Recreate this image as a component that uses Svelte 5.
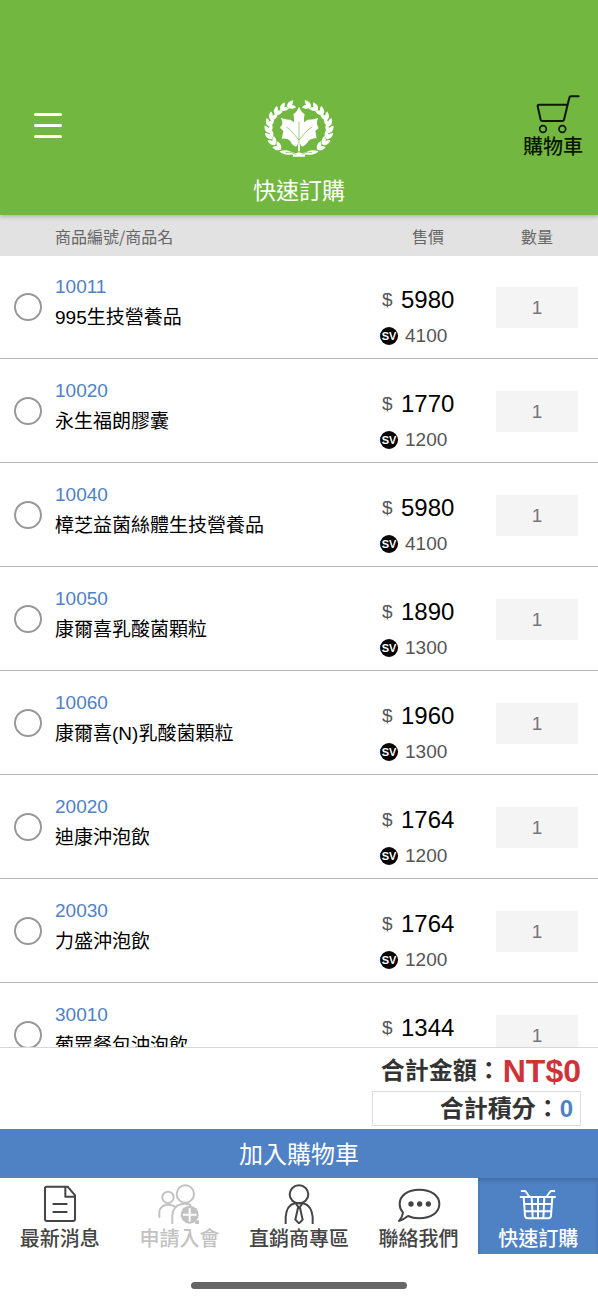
<script>
  let products = $state([
    { code: '10011', name: '995生技營養品', price: 5980, sv: 4100, qty: 1, picked: false },
    { code: '10020', name: '永生福朗膠囊', price: 1770, sv: 1200, qty: 1, picked: false },
    { code: '10040', name: '樟芝益菌絲體生技營養品', price: 5980, sv: 4100, qty: 1, picked: false },
    { code: '10050', name: '康爾喜乳酸菌顆粒', price: 1890, sv: 1300, qty: 1, picked: false },
    { code: '10060', name: '康爾喜(N)乳酸菌顆粒', price: 1960, sv: 1300, qty: 1, picked: false },
    { code: '20020', name: '迪康沖泡飲', price: 1764, sv: 1200, qty: 1, picked: false },
    { code: '20030', name: '力盛沖泡飲', price: 1764, sv: 1200, qty: 1, picked: false },
    { code: '30010', name: '葡眾餐包沖泡飲', price: 1344, sv: 900, qty: 1, picked: false }
  ]);

  let total = $derived(products.reduce((sum, p) => sum + (p.picked ? p.price * p.qty : 0), 0));
  let points = $derived(products.reduce((sum, p) => sum + (p.picked ? p.sv * p.qty : 0), 0));

  // Leaf pairs along the left half of the wreath; the right half is mirrored.
  const leaves = [];
  for (let i = 0; i < 9; i++) {
    const deg = 128 + i * 15;
    const a = (deg * Math.PI) / 180;
    const x = 132 + 90 * Math.cos(a);
    const y = 112 + 74 * Math.sin(a);
    leaves.push({ x, y, r: deg + 90 - 27 });
    leaves.push({ x, y, r: deg + 90 + 27 });
  }
</script>

<div class="app">
  <header>
    <button class="menu" aria-label="選單"><span></span><span></span><span></span></button>
    <div class="brand">
      <svg class="logo" viewBox="24 24 216 174" aria-hidden="true">
        <g fill="#fff">
          {#each [1, -1] as side}
            <g transform={side === 1 ? '' : 'translate(264 0) scale(-1 1)'}>
              {#each leaves as l}
                <path transform="translate({l.x} {l.y}) rotate({l.r})" d="M-2 0C4 -9 16 -8 25 0C16 8 4 7 -2 0Z" />
              {/each}
            </g>
          {/each}
          <path d="M132 44Q138 60 149 67Q146 76 147 91L158 83Q174 84 190 77Q184 88 186 97L191 108L181 117L185 139Q170 137 160 147Q154 160 141 164L135 156V178H129V156L123 164Q110 160 106 147Q98 137 80 140L85 117L75 107L82 97Q84 88 77 77Q92 84 106 83L117 91Q118 76 115 67Q126 60 132 44Z" />
          <path d="M73 178Q91 172 105 178Q121 187 132 181Q143 187 159 178Q173 172 191 178Q180 190 160 188Q146 185 151 194H113Q118 185 104 188Q84 190 73 178Z" />
        </g>
        <path d="M132 88V160M132 144L106 114L94 105M132 144L158 114L172 105" fill="none" stroke="#72b840" stroke-width="2" />
        <path d="M92 182Q108 176 124 188M172 182Q156 176 140 188" fill="none" stroke="#72b840" stroke-width="2" />
      </svg>
      <h1>快速訂購</h1>
    </div>
    <button class="cart">
      <svg viewBox="681 40 174 120" aria-hidden="true">
        <path d="M845 47H822Q818 47 817 51L801 117Q800 121 796 121H736Q732 121 731 117L722 77Q721 72 726 72H811" fill="none" stroke="#0b1605" stroke-width="6" stroke-linecap="round" stroke-linejoin="round" />
        <circle cx="738" cy="145" r="10" fill="none" stroke="#0b1605" stroke-width="5" />
        <circle cx="796" cy="145" r="10" fill="none" stroke="#0b1605" stroke-width="5" />
      </svg>
      <span>購物車</span>
    </button>
  </header>

  <div class="columns grid">
    <span class="c-name">商品編號/商品名</span>
    <span class="c-price">售價</span>
    <span class="c-qty">數量</span>
  </div>

  <ul class="list">
    {#each products as p}
      <li class="grid">
        <input class="pick" type="checkbox" aria-label={p.name} bind:checked={p.picked} />
        <div class="info">
          <a href="#{p.code}">{p.code}</a>
          <p>{p.name}</p>
        </div>
        <div class="price">
          <p class="amount"><span>$</span>{p.price}</p>
          <p class="sv"><span>SV</span>{p.sv}</p>
        </div>
        <input class="qty" type="text" inputmode="numeric" aria-label="數量 {p.name}" bind:value={p.qty} />
      </li>
    {/each}
  </ul>

  <section class="totals">
    <p class="money">合計金額：<strong>NT${total}</strong></p>
    <p class="points">合計積分：<strong>{points}</strong></p>
  </section>

  <button class="add">加入購物車</button>

  <nav>
    <a href="#news">
      <svg viewBox="114 177 132 120" aria-hidden="true">
        <path d="M140 185H203L225 211V282Q225 288 219 288H141Q135 288 135 282V190Q135 185 140 185ZM196 185V215H225M160 237H200M160 261H200" />
      </svg>
      <span>最新消息</span>
    </a>
    <a class="off" href="#join">
      <svg viewBox="473 177 132 120" aria-hidden="true">
        <circle cx="506" cy="217" r="17" />
        <circle cx="558" cy="207" r="26" />
        <path d="M480 276V262Q482 239 506 239Q518 239 525 244M519 297V272Q521 243 545 238Q560 234 573 240" />
        <circle cx="571" cy="269" r="27" class="solid" />
        <path d="M586 286H599V297H588Z" class="solid" />
        <path d="M553 269H589M571 251V287" stroke="#fff" />
      </svg>
      <span>申請入會</span>
    </a>
    <a href="#agents">
      <svg viewBox="831 177 132 120" aria-hidden="true">
        <ellipse cx="897" cy="208" rx="28" ry="27" />
        <path d="M857 297V276Q859 242 884 235H910Q935 242 938 276V297M887 235L897 249L908 235M894 248L886 284L897 295L908 284L900 248" />
      </svg>
      <span>直銷商專區</span>
    </a>
    <a href="#contact">
      <svg viewBox="296 177 132 120" aria-hidden="true">
        <path d="M302 288Q312 277 314 263Q304 252 304 237C304 211 329 194 363 194S423 211 423 237S397 280 363 280Q343 280 329 273Q315 284 302 288Z" />
        <g class="solid"><circle cx="338" cy="237" r="8" /><circle cx="364" cy="237" r="8" /><circle cx="390" cy="237" r="8" /></g>
      </svg>
      <span>聯絡我們</span>
    </a>
    <a class="on" href="#quick" aria-current="page">
      <svg viewBox="655 177 132 120" aria-hidden="true">
        <path d="M669 216H772M672 198H683L696 216M770 198H759L746 216M678 216L682 272Q683 280 690 280H752Q759 280 760 272L764 216M702 216L705 280M721 216V280M740 216L737 280M680 237H762M682 259H760" />
      </svg>
      <span>快速訂購</span>
    </a>
  </nav>
  <div class="home"><span></span></div>
</div>

<style>
  :global(body) {
    margin: 0;
    background: #fff;
  }
  .app {
    height: 100vh;
    display: flex;
    flex-direction: column;
    font-family: "Liberation Sans", "Noto Sans CJK TC", sans-serif;
    color: #000;
  }
  .app * {
    box-sizing: border-box;
  }
  p, h1, ul {
    margin: 0;
    padding: 0;
  }
  button {
    border: 0;
    padding: 0;
    background: none;
    font-family: inherit;
    cursor: pointer;
  }
  a {
    text-decoration: none;
  }
  header {
    flex: none;
    display: grid;
    grid-template-columns: 1fr auto 1fr;
    align-items: start;
    padding: 94px 15px 8px 34px;
    background: #72b840;
    box-shadow: 0 2px 4px rgba(0, 0, 0, 0.2);
    z-index: 1;
  }
  .menu {
    width: 28px;
    margin-top: 19px;
    display: flex;
    flex-direction: column;
    gap: 8px;
  }
  .menu span {
    height: 3px;
    border-radius: 2px;
    background: #fff;
  }
  .brand {
    display: flex;
    flex-direction: column;
    align-items: center;
    padding: 6px 19px 0 0;
  }
  .logo {
    width: 72px;
    height: 58px;
  }
  h1 {
    margin-top: 17px;
    font-size: 23px;
    line-height: 32px;
    font-weight: 400;
    color: #fff;
  }
  .cart {
    justify-self: end;
    display: flex;
    flex-direction: column;
    align-items: center;
    color: #0b1605;
    font-size: 20px;
    line-height: 26px;
    font-weight: 500;
  }
  .cart svg {
    width: 58px;
    height: 40px;
  }
  .grid {
    display: grid;
    grid-template-columns: 55px 1fr 116px 82px;
    padding-right: 20px;
  }
  .columns {
    flex: none;
    padding-top: 2px;
    background: #e2e2e2;
    color: #666;
    font-family: "Noto Sans CJK TC", sans-serif;
    font-size: 16px;
    line-height: 38px;
    border-bottom: 1px solid #e2e2e2;
    margin-bottom: -1px;
  }
  .c-name {
    grid-column: 2;
  }
  .c-price {
    padding-left: 32px;
  }
  .c-qty {
    text-align: center;
  }
  .list {
    flex: 1;
    min-height: 0;
    overflow-y: auto;
    scrollbar-width: none;
    list-style: none;
  }
  li {
    height: 104px;
    border-bottom: 1px solid #b4b4b4;
    align-items: start;
  }
  .pick {
    appearance: none;
    width: 28px;
    height: 28px;
    margin: 38px 0 0 14px;
    border: 2px solid #999;
    border-radius: 50%;
  }
  .pick:checked {
    background: #4f81c5;
  }
  .info {
    padding-top: 16px;
    font-size: 19px;
    line-height: 31px;
    white-space: nowrap;
  }
  .info a {
    display: block;
    color: #4f81c5;
  }
  .price {
    padding-top: 27px;
    line-height: 36px;
  }
  .price p {
    display: flex;
    align-items: center;
  }
  .amount {
    font-size: 24px;
  }
  .amount span {
    width: 21px;
    padding-left: 2px;
    font-size: 19px;
    color: #555;
  }
  .sv {
    gap: 7px;
    font-size: 19px;
    color: #555;
  }
  .sv span {
    width: 18px;
    height: 18px;
    border-radius: 50%;
    background: #000;
    color: #fff;
    font-size: 11px;
    line-height: 18px;
    font-weight: 700;
    text-align: center;
  }
  .qty {
    width: 100%;
    height: 41px;
    margin: 32px 0 0;
    padding: 0;
    border: 0;
    border-radius: 0;
    background: #f4f4f4;
    color: #777;
    font-family: inherit;
    font-size: 19px;
    text-align: center;
  }
  .totals {
    flex: none;
    display: flex;
    flex-direction: column;
    align-items: flex-end;
    padding: 0 17px 3px;
    border-top: 1px solid #d8d8d8;
    color: #333;
    font-size: 24px;
    font-weight: 700;
  }
  .money {
    display: flex;
    align-items: center;
    gap: 2px;
    height: 43px;
    padding-top: 3px;
    line-height: 40px;
  }
  .money strong {
    color: #cf3339;
    font-size: 32px;
  }
  .points {
    width: 35%;
    height: 35px;
    padding-right: 7px;
    border: 1px solid #ddd;
    line-height: 33px;
    text-align: right;
    flex: none;
    min-width: 209px;
  }
  .points strong {
    color: #4f81c5;
  }
  .add {
    flex: none;
    height: 49px;
    padding-bottom: 3px;
    background: #4f81c5;
    color: #fff;
    font-size: 24px;
  }
  nav {
    flex: none;
    display: grid;
    grid-template-columns: repeat(5, 1fr);
    height: 75px;
  }
  nav a {
    display: flex;
    flex-direction: column;
    align-items: center;
    padding-top: 6px;
    color: #444;
    font-size: 20px;
    line-height: 30px;
    font-weight: 500;
    white-space: nowrap;
  }
  nav svg {
    width: 44px;
    height: 40px;
    fill: none;
    stroke: currentColor;
    stroke-width: 6;
    stroke-linecap: round;
    stroke-linejoin: round;
  }
  .solid {
    fill: currentColor;
    stroke: none;
  }
  nav .off {
    color: #c2c2c2;
  }
  nav .on {
    background: #4f81c5;
    color: #fff;
    box-shadow: inset 0 3px 4px -1px rgba(0, 0, 0, 0.2);
  }
  .home {
    flex: none;
    height: 47px;
    display: flex;
    justify-content: center;
    align-items: flex-end;
    padding-bottom: 11px;
  }
  .home span {
    width: 36%;
    height: 7px;
    border-radius: 4px;
    background: #666;
  }
</style>
